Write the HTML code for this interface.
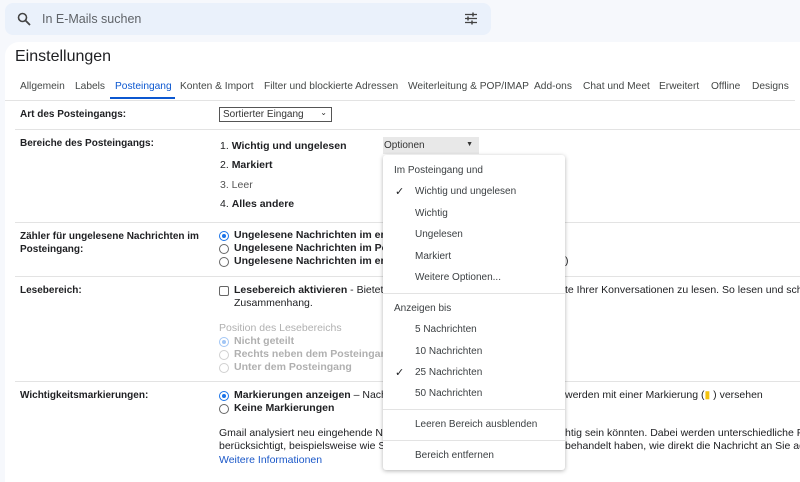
<!DOCTYPE html>
<html><head><meta charset="utf-8"><style>
*{margin:0;padding:0;box-sizing:border-box}
body{width:800px;height:475px;overflow:hidden;background:#f6f8fc;font-family:"Liberation Sans",Arial,sans-serif;color:#202124;position:relative;font-size:10.5px}
.a{position:absolute;white-space:nowrap}
.search{position:absolute;left:5px;top:3px;width:486px;height:32px;background:#eaf1fb;border-radius:8px}
.card{position:absolute;left:5px;top:42px;width:800px;height:440px;background:#fff;border-radius:14px 0 0 0}
.tab{position:absolute;top:81px;font-size:10.2px;color:#444746}
.hr{position:absolute;left:15px;width:790px;height:1px;background:#e3e3e3}
.lbl{font-weight:bold;font-size:10px}
.b{font-weight:bold}
.rad{position:absolute;width:10px;height:10px;border:1px solid #666;border-radius:50%;background:#fff}
.rad.on{border-color:#1a73e8}
.rad.on::after{content:"";position:absolute;left:2px;top:2px;width:4px;height:4px;border-radius:50%;background:#1a73e8}
.dis{color:#b0b0b0}
.menu{position:absolute;left:383px;top:155px;width:182px;height:315px;background:#fff;box-shadow:0 1px 4px rgba(0,0,0,.3);border-radius:3px}
.mi{position:absolute;left:32px;font-size:10px;color:#3c4043}
.mh{position:absolute;left:11px;font-size:10px;color:#3c4043}
.ck{position:absolute;left:12px;font-size:11px;color:#202124}
.ms{position:absolute;left:0;width:182px;height:1px;background:#e3e3e3}
</style></head><body>
<div class="search">
<svg class="a" style="left:12px;top:9px" width="14" height="14" viewBox="0 0 14 14"><circle cx="5.5" cy="5.5" r="4" fill="none" stroke="#444" stroke-width="1.6"/><path d="M8.5 8.5L13 13" stroke="#444" stroke-width="1.8"/></svg>
<div class="a" style="left:37px;top:9px;font-size:12.5px;color:#5f6368">In E-Mails suchen</div>
<svg class="a" style="left:459px;top:9px" width="14" height="13" viewBox="0 0 14 13"><path d="M1 2.5h12M1 6.5h12M1 10.5h12" stroke="#444" stroke-width="1.3"/><path d="M9 0.5v4M4 4.5v4M8 8.5v4" stroke="#444" stroke-width="1.5"/></svg>
</div>
<div class="card"></div>
<div class="a" style="left:15px;top:48px;font-size:16px;color:#202124">Einstellungen</div>
<div class="tab" style="left:20px">Allgemein</div>
<div class="tab" style="left:75px">Labels</div>
<div class="tab" style="left:115px;color:#0b57d0">Posteingang</div>
<div class="a" style="left:110px;top:97px;width:65px;height:2px;background:#0b57d0"></div>
<div class="tab" style="left:180px">Konten &amp; Import</div>
<div class="tab" style="left:264px">Filter und blockierte Adressen</div>
<div class="tab" style="left:408px">Weiterleitung &amp; POP/IMAP</div>
<div class="tab" style="left:534px">Add-ons</div>
<div class="tab" style="left:583px">Chat und Meet</div>
<div class="tab" style="left:659px">Erweitert</div>
<div class="tab" style="left:711px">Offline</div>
<div class="tab" style="left:752px">Designs</div>
<div class="hr" style="left:5px;top:100px"></div>

<div class="a lbl" style="left:20px;top:109px">Art des Posteingangs:</div>
<div class="a" style="left:219px;top:107px;width:113px;height:15px;border:1px solid #555;font-size:10px;padding:1px 3px;color:#333">Sortierter Eingang<span style="position:absolute;right:4px;top:0px;font-size:8px">&#8964;</span></div>
<div class="hr" style="top:129px"></div>

<div class="a lbl" style="left:20px;top:138px">Bereiche des Posteingangs:</div>
<div class="a" style="left:220px;top:140px">1. <span class="b">Wichtig und ungelesen</span></div>
<div class="a" style="left:383px;top:137px;width:96px;height:17px;background:#e8e8e8;padding:3px 1px;font-size:10px;color:#333">Optionen<span style="position:absolute;right:6px;top:4px;font-size:7px">&#9660;</span></div>
<div class="a" style="left:220px;top:159px">2. <span class="b">Markiert</span></div>
<div class="a" style="left:220px;top:179px;color:#555">3. Leer</div>
<div class="a" style="left:220px;top:198px">4. <span class="b">Alles andere</span></div>
<div class="hr" style="top:222px"></div>

<div class="a lbl" style="left:20px;top:230px;line-height:13px">Zähler für ungelesene Nachrichten im<br>Posteingang:</div>
<div class="rad on" style="left:219px;top:231px"></div><div class="a b" style="left:234px;top:229px">Ungelesene Nachrichten im ersten</div>
<div class="rad" style="left:219px;top:244px"></div><div class="a b" style="left:234px;top:242px">Ungelesene Nachrichten im Posteingang</div>
<div class="rad" style="left:219px;top:257px"></div><div class="a b" style="left:234px;top:255px">Ungelesene Nachrichten im ersten</div>
<div class="a" style="left:565px;top:255px">)</div>
<div class="hr" style="top:276px"></div>

<div class="a lbl" style="left:20px;top:285px">Lesebereich:</div>
<div class="a" style="left:219px;top:286px;width:10px;height:10px;border:1px solid #666;border-radius:2px"></div>
<div class="a" style="left:234px;top:284px"><span class="b">Lesebereich aktivieren</span> - Bietet die</div>
<div class="a" style="left:565px;top:284px">te Ihrer Konversationen zu lesen. So lesen und schreiben</div>
<div class="a" style="left:234px;top:297px">Zusammenhang.</div>
<div class="a dis" style="left:219px;top:322px">Position des Lesebereichs</div>
<div class="rad on" style="left:219px;top:337px;opacity:.4"></div><div class="a dis b" style="left:234px;top:335px">Nicht geteilt</div>
<div class="rad" style="left:219px;top:350px;opacity:.3"></div><div class="a dis b" style="left:234px;top:348px">Rechts neben dem Posteingang</div>
<div class="rad" style="left:219px;top:363px;opacity:.3"></div><div class="a dis b" style="left:234px;top:361px">Unter dem Posteingang</div>
<div class="hr" style="top:381px"></div>

<div class="a lbl" style="left:20px;top:390px">Wichtigkeitsmarkierungen:</div>
<div class="rad on" style="left:219px;top:391px"></div><div class="a" style="left:234px;top:389px"><span class="b">Markierungen anzeigen</span> – Nachrichten</div>
<div class="a" style="left:565px;top:389px">werden mit einer Markierung (<span style="color:#f4c20d">&#9646;</span> ) versehen</div>
<div class="rad" style="left:219px;top:404px"></div><div class="a b" style="left:234px;top:402px">Keine Markierungen</div>
<div class="a" style="left:219px;top:427px">Gmail analysiert neu eingehende Nachrichten</div>
<div class="a" style="left:565px;top:427px">htig sein könnten. Dabei werden unterschiedliche Fakto</div>
<div class="a" style="left:219px;top:440px">berücksichtigt, beispielsweise wie Sie ähnliche</div>
<div class="a" style="left:565px;top:440px">behandelt haben, wie direkt die Nachricht an Sie adres</div>
<div class="a" style="left:219px;top:454px;color:#1a57c8">Weitere Informationen</div>

<div class="menu">
<div class="mh" style="top:10px">Im Posteingang und</div>
<div class="ck" style="top:30px">&#10003;</div><div class="mi" style="top:31px">Wichtig und ungelesen</div>
<div class="mi" style="top:53px">Wichtig</div>
<div class="mi" style="top:74px">Ungelesen</div>
<div class="mi" style="top:96px">Markiert</div>
<div class="mi" style="top:117px">Weitere Optionen...</div>
<div class="ms" style="top:138px"></div>
<div class="mh" style="top:148px">Anzeigen bis</div>
<div class="mi" style="top:169px">5 Nachrichten</div>
<div class="mi" style="top:191px">10 Nachrichten</div>
<div class="ck" style="top:211px">&#10003;</div><div class="mi" style="top:212px">25 Nachrichten</div>
<div class="mi" style="top:233px">50 Nachrichten</div>
<div class="ms" style="top:254px"></div>
<div class="mi" style="top:264px">Leeren Bereich ausblenden</div>
<div class="ms" style="top:285px"></div>
<div class="mi" style="top:295px">Bereich entfernen</div>
</div>
</body></html>
